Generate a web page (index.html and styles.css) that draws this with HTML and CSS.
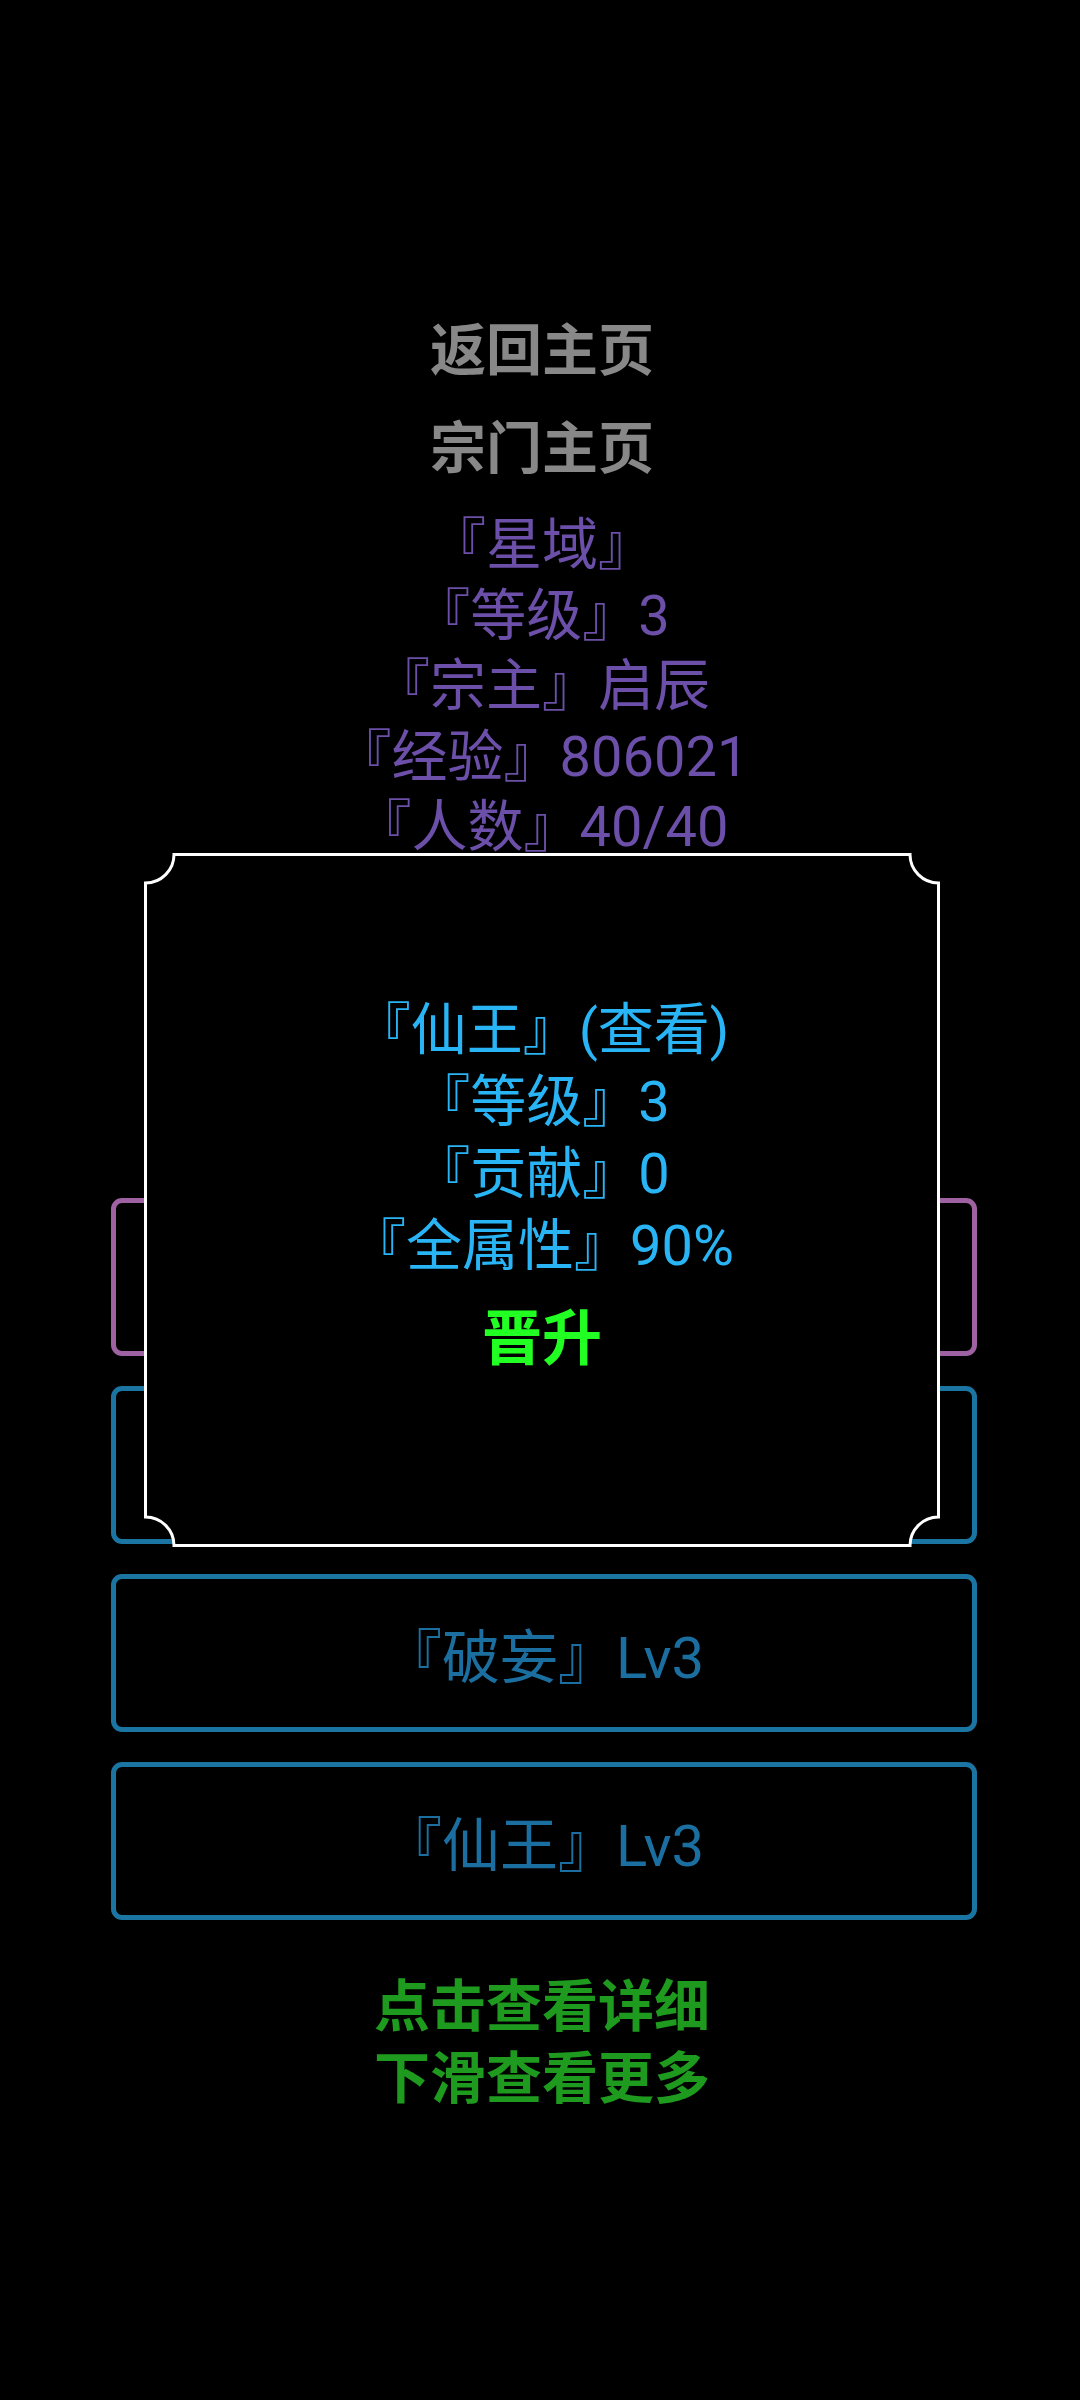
FILE: index.html
```html
<!DOCTYPE html>
<html lang="zh-CN">
<head>
<meta charset="utf-8">
<title>宗门</title>
<link rel="stylesheet" href="styles.css">
</head>
<body>
<div class="page">
  <div class="nav">
    <div class="nav-item">返回主页</div>
    <div class="nav-item">宗门主页</div>
  </div>
  <div class="info">
    <div class="info-line">『星域』</div>
    <div class="info-line">『等级』3</div>
    <div class="info-line">『宗主』启辰</div>
    <div class="info-line">『经验』806021</div>
    <div class="info-line">『人数』40/40</div>
  </div>
  <div class="buttons">
    <div class="btn btn-purple"></div>
    <div class="btn btn-blue"></div>
    <div class="btn btn-blue">『破妄』Lv3</div>
    <div class="btn btn-blue">『仙王』Lv3</div>
  </div>
  <div class="hint">
    <div class="hint-line">点击查看详细</div>
    <div class="hint-line">下滑查看更多</div>
  </div>

  <div class="modal">
    <svg class="modal-frame" width="796" height="694" viewBox="0 0 796 694">
      <path d="M30 1.5 H766 A28.5 28.5 0 0 0 794.5 30 V664 A28.5 28.5 0 0 0 766 692.5 H30 A28.5 28.5 0 0 0 1.5 664 V30 A28.5 28.5 0 0 0 30 1.5 Z" fill="#000" stroke="#fff" stroke-width="3"/>
    </svg>
    <div class="modal-body">
      <div class="modal-line">『仙王』(查看)</div>
      <div class="modal-line">『等级』3</div>
      <div class="modal-line">『贡献』0</div>
      <div class="modal-line">『全属性』90%</div>
      <div class="modal-action">晋升</div>
    </div>
  </div>
</div>
</body>
</html>
```

FILE: styles.css
```css
html, body {
  margin: 0;
  padding: 0;
  background: #000;
}

body {
  width: 1080px;
  min-height: 2400px;
  font-family: Roboto, "Noto Sans CJK SC", sans-serif;
}

.page {
  position: relative;
  padding: 302px 0 0 4px;
  text-align: center;
}

.nav-item {
  font-size: 56px;
  line-height: 98px;
  font-weight: 700;
  color: #888888;
}

.info {
  margin-top: 12px;
}

.info-line {
  font-size: 56px;
  line-height: 70.5px;
  color: #6b4fa8;
}

.buttons {
  display: flex;
  flex-direction: column;
  gap: 30px;
  margin: 335px 103px 0 107px;
}

.btn {
  box-sizing: border-box;
  height: 158px;
  border: 5px solid #1b75a3;
  border-radius: 11px;
  display: flex;
  align-items: center;
  justify-content: center;
  font-size: 58px;
  color: #1b6fa0;
}

.btn-purple {
  border-color: #9e62a3;
}

.hint {
  margin-top: 51px;
}

.hint-line {
  font-size: 56px;
  line-height: 72px;
  font-weight: 700;
  color: #1e9a1e;
}

.modal {
  position: absolute;
  top: 853px;
  left: 144px;
  width: 796px;
  height: 694px;
}

.modal-frame {
  position: absolute;
  top: 0;
  left: 0;
  display: block;
}

.modal-body {
  position: relative;
  padding-top: 141px;
  text-align: center;
}

.modal-line {
  font-size: 56px;
  line-height: 72px;
  color: #29b5f5;
}

.modal-action {
  margin-top: 22px;
  font-size: 60px;
  line-height: 72px;
  font-weight: 700;
  color: #22ff22;
}
```
